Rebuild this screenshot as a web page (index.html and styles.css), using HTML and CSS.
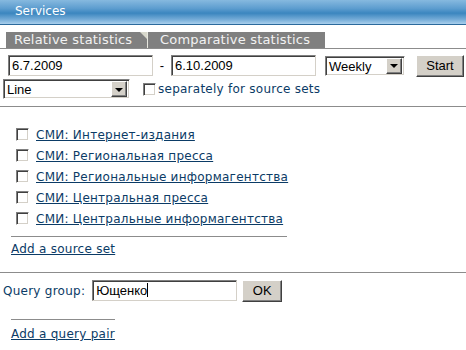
FILE: index.html
```html
<!DOCTYPE html>
<html>
<head>
<meta charset="utf-8">
<link rel="stylesheet" href="styles.css">
</head>
<body>
<div class="header">Services</div>
<div class="tabs">
  <div class="tab tab-first">Relative statistics<span class="fold"></span></div>
  <div class="tab tab-second">Comparative statistics</div>
</div>
<div class="row row1">
  <div class="input date">6.7.2009</div>
  <span class="dash">-</span>
  <div class="input date">6.10.2009</div>
  <div class="select period"><span class="sel-text">Weekly</span><span class="sel-btn"><span class="tri"></span></span></div>
  <div class="button start">Start</div>
</div>
<div class="row row2">
  <div class="select chart"><span class="sel-text">Line</span><span class="sel-btn"><span class="tri"></span></span></div>
  <span class="check"></span>
  <span class="label">separately for source sets</span>
</div>
<div class="sep"></div>
<ul class="sources">
  <li><span class="check"></span><a href="#">СМИ: Интернет-издания</a></li>
  <li><span class="check"></span><a href="#">СМИ: Региональная пресса</a></li>
  <li><span class="check"></span><a href="#">СМИ: Региональные информагентства</a></li>
  <li><span class="check"></span><a href="#">СМИ: Центральная пресса</a></li>
  <li><span class="check"></span><a href="#">СМИ: Центральные информагентства</a></li>
</ul>
<div class="add add-source"><a href="#">Add a source set</a></div>
<div class="sep sep2"></div>
<div class="row query">
  <span class="label">Query group:</span>
  <div class="input qinput">Ющенко<span class="caret"></span></div>
  <div class="button ok">OK</div>
</div>
<div class="add add-query"><a href="#">Add a query pair</a></div>
</body>
</html>
```
FILE: styles.css
```css
* { box-sizing: border-box; }
body {
  margin: 0;
  background: #fff;
  font-family: "DejaVu Sans", Verdana, sans-serif;
  font-size: 12px;
  letter-spacing: 0.25px;
  color: #0b3b66;
}
.header {
  height: 25px;
  border-bottom: 1px solid #2b6a9c;
  background: linear-gradient(#86b9df 0%, #5d9dcf 35%, #3b86bf 55%, #72aad6 80%, #a9cfec 100%);
  color: #fff;
  font-size: 12px;
  letter-spacing: 0;
  line-height: 23px;
  padding-left: 15px;
}
.tabs {
  display: flex;
  margin-top: 7px;
  padding-left: 6px;
  border-bottom: 1px solid #8c8c8c;
}
.tab {
  position: relative;
  height: 16px;
  line-height: 16px;
  background: #808080;
  color: #f2f2f2;
  font-size: 13px;
  letter-spacing: 0.2px;
  padding: 0 8px;
}
.tab-first {
  width: 142px;
  border-right: 1px solid #e6e6de;
}
.tab-second {
  width: 177px;
  padding-left: 12px;
}
.fold {
  position: absolute;
  right: 0;
  top: 0;
  width: 0;
  height: 0;
  border-top: 7px solid #d8d8cc;
  border-left: 7px solid transparent;
}
.row {
  display: flex;
  align-items: center;
}
.row1 {
  margin-top: 6px;
  padding-left: 8px;
  height: 21px;
}
.input {
  height: 21px;
  border-top: 1px solid #808080;
  border-left: 1px solid #808080;
  border-right: 1px solid #d4d0c8;
  border-bottom: 1px solid #d4d0c8;
  box-shadow: inset 1px 1px 0 #404040;
  background: #fff;
  color: #000;
  font-family: "Liberation Sans", Arial, sans-serif;
  font-size: 13px;
  letter-spacing: 0;
  line-height: 19px;
  padding-left: 3px;
}
.date { width: 145px; }
.dash {
  width: 18px;
  text-align: center;
  color: #000;
  font-family: "Liberation Sans", Arial, sans-serif;
  font-size: 13px;
}
.select {
  display: flex;
  height: 20px;
  border-top: 1px solid #808080;
  border-left: 1px solid #808080;
  border-right: 1px solid #fff;
  border-bottom: 1px solid #fff;
  box-shadow: inset 1px 1px 0 #404040, inset -1px -1px 0 #d4d0c8;
  background: #fff;
  color: #000;
  font-family: "Liberation Sans", Arial, sans-serif;
  font-size: 13px;
  letter-spacing: 0;
  line-height: 18px;
  padding: 1px 2px 1px 2px;
}
.sel-text { flex: 1; padding-left: 1px; }
.sel-btn {
  width: 16px;
  height: 16px;
  background: #d4d0c8;
  border-top: 1px solid #fff;
  border-left: 1px solid #fff;
  border-right: 1px solid #404040;
  border-bottom: 1px solid #404040;
  box-shadow: inset -1px -1px 0 #808080;
  display: flex;
  align-items: center;
  justify-content: center;
}
.tri {
  width: 0;
  height: 0;
  border-top: 4px solid #000;
  border-left: 4px solid transparent;
  border-right: 4px solid transparent;
  margin-top: 1px;
}
.period { width: 80px; margin-left: 9px; }
.button {
  height: 22px;
  background: #d4d0c8;
  border-top: 1px solid #fff;
  border-left: 1px solid #fff;
  border-right: 1px solid #404040;
  border-bottom: 1px solid #404040;
  box-shadow: inset -1px -1px 0 #808080;
  color: #000;
  font-family: "Liberation Sans", Arial, sans-serif;
  font-size: 13px;
  letter-spacing: 0;
  line-height: 19px;
  text-align: center;
}
.start { width: 48px; margin-left: 11px; }
.row2 {
  margin-top: 3px;
  padding-left: 3px;
  height: 20px;
}
.chart { width: 127px; }
.check {
  display: inline-block;
  width: 13px;
  height: 13px;
  border-top: 1px solid #808080;
  border-left: 1px solid #808080;
  border-right: 1px solid #fff;
  border-bottom: 1px solid #fff;
  box-shadow: inset 1px 1px 0 #404040, inset -1px -1px 0 #d4d0c8;
  background: #fff;
  flex: none;
}
.row2 .check { margin-left: 13px; margin-right: 2px; }
.label { color: #0b3b66; }
.sep {
  height: 1px;
  background: #8c8c8c;
  margin-top: 7px;
}
.sources {
  list-style: none;
  margin: 17px 0 0 0;
  padding: 0 0 0 16px;
}
.sources li {
  display: flex;
  align-items: center;
  height: 21px;
}
.sources .check { margin-right: 7px; }
a {
  color: #0b3b66;
  text-decoration: underline;
}
.add {
  margin-left: 11px;
  padding-top: 5px;
  border-top: 1px solid #8c8c8c;
  height: 22px;
}
.add-source { width: 276px; margin-top: 7px; }
.sep2 { margin-top: 14px; }
.query {
  margin-top: 7px;
  padding-left: 3px;
  height: 21px;
}
.qinput { width: 145px; margin-left: 7px; }
.caret {
  display: inline-block;
  width: 1px;
  height: 14px;
  background: #000;
  vertical-align: -2px;
}
.ok { width: 40px; margin-left: 5px; }
.add-query { width: 104px; margin-top: 18px; padding-top: 7px; }
```
